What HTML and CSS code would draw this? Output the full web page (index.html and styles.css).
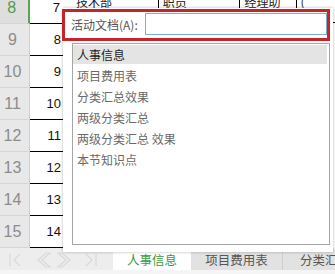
FILE: index.html
```html
<!DOCTYPE html>
<html>
<head>
<meta charset="utf-8">
<link rel="stylesheet" href="styles.css">
</head>
<body>
<div class="app">
  <div class="sheet">
    <div class="row first">
      <div class="rh active">8</div>
      <div class="ca">7</div>
      <div class="cb">技术部</div>
      <div class="cc">职员</div>
      <div class="cd">经理助</div>
      <div class="ce">(</div>
    </div>
    <div class="row"><div class="rh">9</div><div class="ca">8</div></div>
    <div class="row"><div class="rh">10</div><div class="ca">9</div></div>
    <div class="row"><div class="rh">11</div><div class="ca">10</div></div>
    <div class="row"><div class="rh">12</div><div class="ca">11</div></div>
    <div class="row"><div class="rh">13</div><div class="ca">12</div></div>
    <div class="row"><div class="rh">14</div><div class="ca">13</div></div>
    <div class="row"><div class="rh">15</div><div class="ca">14</div></div>
  </div>
  <div class="tabbar">
    <div class="nav">
      <svg width="113" height="20" viewBox="0 0 113 20" fill="none" stroke="#d9d9d9" stroke-width="1.2">
        <path d="M10 4v12M20 4l-6 6 6 6"/>
        <path d="M50 3h-4l-8 7 8 7h4l-8-7z"/>
        <path d="M58 3h4l8 7-8 7h-4l8-7z"/>
        <path d="M86 4l6 6-6 6M96 4v12"/>
      </svg>
    </div>
    <div class="tab on">人事信息</div>
    <div class="tab">项目费用表</div>
    <div class="tab last">分类汇总效果</div>
  </div>

  <div class="dialog">
    <div class="field">
      <span class="label">活动文档(A):</span>
      <span class="input"></span>
    </div>
    <ul class="list">
      <li class="sel">人事信息</li>
      <li>项目费用表</li>
      <li>分类汇总效果</li>
      <li>两级分类汇总</li>
      <li>两级分类汇总 效果</li>
      <li>本节知识点</li>
    </ul>
    <div class="mark"></div>
  </div>
</div>
</body>
</html>
```
FILE: styles.css
```css
html, body {
  margin: 0;
  padding: 0;
  background: #fff;
}
.app {
  position: relative;
  width: 335px;
  height: 274px;
  overflow: hidden;
  font-family: "Noto Sans CJK SC", "Liberation Sans", sans-serif;
}
.sheet {
  height: 248px;
  overflow: hidden;
}
.row {
  display: flex;
  height: 32px;
}
.row.first {
  margin-top: -8px;
}
.rh {
  width: 29px;
  height: 31px;
  border-right: 1px solid #cfcfcf;
  border-bottom: 1px solid #d6d6d6;
  background: #e8e8e8;
  color: #8c8c8c;
  font-family: "Liberation Sans", sans-serif;
  font-size: 16px;
  display: flex;
  align-items: center;
  justify-content: center;
  padding-right: 4px;
  box-sizing: content-box;
  width: 25px;
}
.rh.active {
  background: #dedede;
  color: #4f9d4f;
  border-right: 2px solid #5aa55a;
  width: 24px;
}
.ca {
  width: 31px;
  height: 31px;
  border-bottom: 1px solid #000;
  padding-right: 2px;
  display: flex;
  align-items: center;
  justify-content: flex-end;
  font-family: "Liberation Sans", sans-serif;
  font-size: 13px;
  color: #111;
}
.cb, .cc, .cd, .ce {
  height: 31px;
  border-bottom: 1px solid #000;
  font-size: 12px;
  color: #222;
  padding-left: 4px;
  line-height: 20px;
  box-sizing: border-box;
  border-left: 1px solid #000;
}
.cb { width: 97px; border-left: none; padding-left: 14px; }
.cc { width: 83px; }
.cd { width: 57px; }
.ce { width: 40px; }

.tabbar {
  height: 26px;
  background: #ededed;
  display: flex;
  align-items: flex-start;
  padding-top: 2px;
  box-sizing: border-box;
  border-bottom: 4px solid #f5f5f5;
}
.nav {
  width: 113px;
  height: 20px;
  flex: none;
}
.nav svg { display: block; }
.tab {
  flex: none;
  height: 20px;
  line-height: 20px;
  font-size: 12.5px;
  color: #555;
  background: #e2e2e2;
  text-align: center;
  border-right: 1px solid #d0d0d0;
  width: 91px;
}
.tab.on {
  width: 78px;
  background: #fff;
  color: #3a9b3f;
  border-right: none;
}
.tab.last {
  width: 80px;
  text-align: left;
  padding-left: 17px;
  border-right: none;
}

.dialog {
  position: absolute;
  left: 63px;
  top: 8px;
  width: 270px;
  height: 244px;
  background: #fff;
  box-shadow: 0 0 3px rgba(0,0,0,0.28);
}
.field {
  display: flex;
  align-items: center;
  height: 22px;
  margin-top: 5px;
  padding-left: 8px;
}
.label {
  width: 74px;
  font-size: 12px;
  color: #555;
}
.input {
  width: 180px;
  height: 20px;
  border: 1px solid #78afd2;
  background: #fff;
}
.list {
  list-style: none;
  margin: 8px 0 0 9px;
  padding: 1px 2px 0 0;
  width: 254px;
  height: 199px;
  border: 1px solid #a6a6a6;
  box-sizing: content-box;
}
.list li {
  height: 19px;
  line-height: 19px;
  margin-bottom: 2px;
  padding-left: 4px;
  font-size: 12px;
  color: #6a6a6a;
}
.list li.sel {
  background: #e4e4e4;
  color: #1e1e1e;
}
.mark {
  position: absolute;
  left: -1px;
  top: 1px;
  width: 262px;
  height: 26px;
  border: 3px solid #c6232b;
}
```
